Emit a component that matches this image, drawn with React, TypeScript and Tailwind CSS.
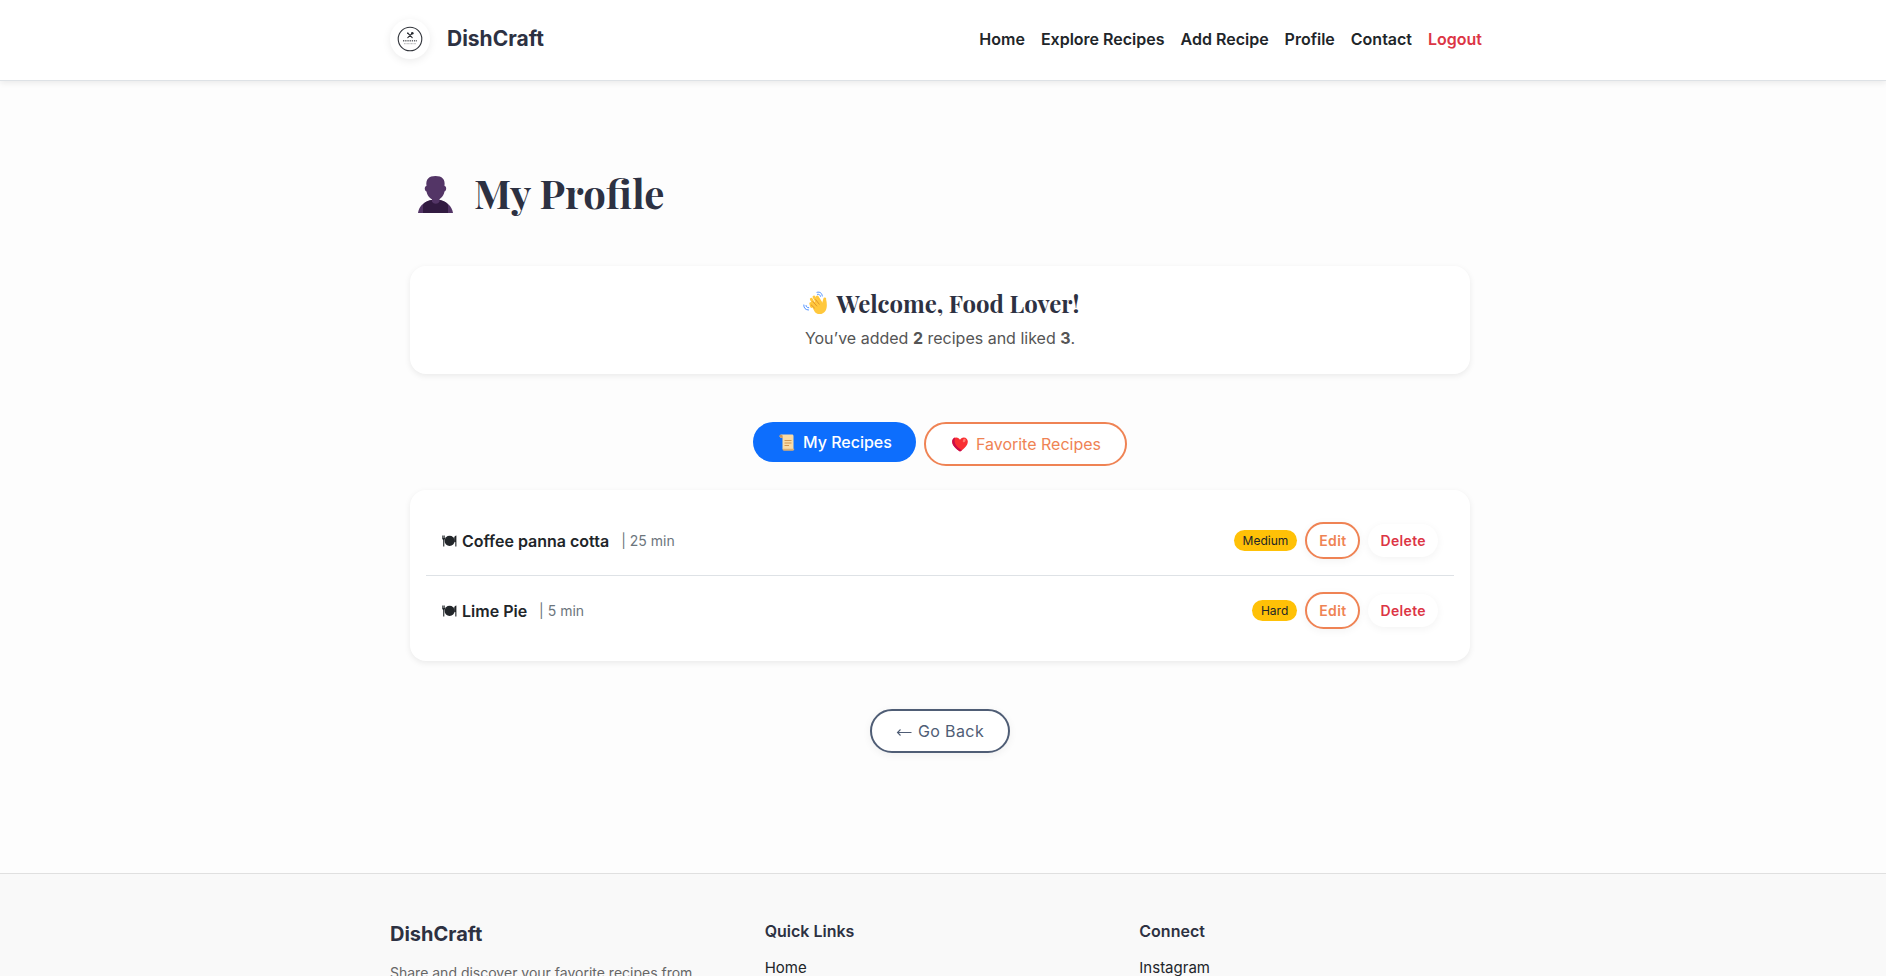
import React from "react";

const recipes = [
  { name: "Coffee panna cotta", time: "25 min", level: "Medium" },
  { name: "Lime Pie", time: "5 min", level: "Hard" },
];

const navLinks = ["Home", "Explore Recipes", "Add Recipe", "Profile", "Contact"];

function Logo() {
  return (
    <svg viewBox="0 0 40 40" className="size-10" aria-hidden="true">
      <circle cx="20" cy="20" r="11.8" fill="#fff" stroke="#30333a" strokeWidth="1.1" />
      <g stroke="#26292f" strokeWidth="1.1" strokeLinecap="round">
        <path d="M17.800 14.200l4.400 4.400M22.200 14.400l-4.400 4.200" />
      </g>
      <circle cx="22.300" cy="14.300" r="1.300" fill="#26292f" />
      <circle cx="17.800" cy="14.200" r="0.800" fill="#26292f" />
      <path d="M13 21.800h14" stroke="#26292f" strokeWidth="1.500" strokeDasharray="1.300 0.900" opacity="0.7" />
      <path d="M14 24.700h12" stroke="#26292f" strokeWidth="0.700" strokeDasharray="1 0.400" opacity="0.500" />
    </svg>
  );
}

function Bust() {
  return (
    <svg viewBox="0 0 35 37" className="mt-1 h-[37px] w-[35px]" aria-hidden="true">
      <path d="M0 37c1-6 4-10.500 13-13h9c8 2 12 7 13 13z" fill="#533566" />
      <path d="M5 37V28.500c2-2.500 5-4 9-4.500h7.500c3.500.6 6.500 2 8.500 4.500V37z" fill="#321b41" />
      <path d="M14 21h7.500v4.500c-1.500 3-6 3-7.500 0z" fill="#533566" />
      <path d="M8.500 10C7.500 3 11 0 17.500 0S27.500 3 26.500 10c2-.2 2.500 4.500 0 5.500C25.500 21 21 24.500 17.500 24.500S9.500 21 8.500 15.500c-2.500-1-2-5.700 0-5.500z" fill="#533566" />
    </svg>
  );
}

function Wave() {
  return (
    <svg viewBox="0 0 24 24" className="size-6" aria-hidden="true">
      <path
        d="M8.500 15.500L7.700 12.500M11 13L8.300 8.300M14 11L11 6M17.500 11L14.300 6M20.500 14.500C20 11.500 21.500 9.500 21.800 7.800"
        stroke="#ffc83d"
        strokeWidth="2.800"
        strokeLinecap="round"
        fill="none"
      />
      <path d="M7.500 13L15.500 8.500l4.500 3.500 3-4c1.200 4.500 1.200 9-.6 12-2.200 3.600-7.400 4.200-10.400 1.200z" fill="#ffc83d" />
      <path d="M8.300 14L11.500 17M9.800 10.500l4 4.500M12.700 8.700l3.500 4.500" stroke="#e08f2a" strokeWidth=".9" strokeLinecap="round" />
      <path d="M.8 14c-.2 3 1.700 5 4.700 5M3 14.500c0 1.300 1 2.100 2.700 2.200M14 1.300c3-.8 5 .8 5.300 3.700M14.500 3.300c1.700-.3 2.700.7 3 2" stroke="#5092ff" strokeWidth="1" strokeLinecap="round" fill="none" />
    </svg>
  );
}

function Scroll() {
  return (
    <svg viewBox="0 0 16 17" className="h-[17px] w-4" aria-hidden="true">
      <path d="M1.800.5h11.200c1 0 1.500.7 1.500 1.500v13H3.500V4C1.500 4 .5 3 .5 2z" fill="#fadba6" />
      <path d="M.5 1.800C.5.500 3.500.3 3.700 2.200V4C1.500 4 .5 3 .5 1.800z" fill="#c99660" />
      <path d="M3.500 14.800h11.800c0 1.400-.8 2-2 2H5c-1 0-1.500-.8-1.500-2z" fill="#dfae70" />
      <path d="M5.500 6.500h7M5.500 9h7M5.500 11.500h4.500" stroke="#d39650" strokeWidth="1" />
    </svg>
  );
}

function Heart() {
  return (
    <svg viewBox="0 0 16 15" className="h-[15px] w-4" aria-hidden="true">
      <path d="M8 14.600C4 12 .2 8.800.2 4.600.2 2 2 .4 4.200.4 6 .4 7.400 1.300 8 2.800 8.600 1.300 10 .4 11.800.4c2.200 0 4 1.600 4 4.200 0 4.200-3.800 7.400-7.800 10z" fill="#f92f32" />
      <path d="M3 .6C1.300 1.100.2 2.600.2 4.600c0 4.200 3.800 7.400 7.800 10 .7-.4 1.300-.9 2-1.400C4.500 10.500 1.300 6 3 .6z" fill="#ca0b4a" />
      <ellipse cx="12.200" cy="3.500" rx="1.300" ry="1.900" transform="rotate(25 12.200 3.500)" fill="#ff7a70" />
    </svg>
  );
}

function Plate() {
  return (
    <svg viewBox="0 0 15 12" className="h-3 w-[15px]" fill="#212529" aria-hidden="true">
      <circle cx="7.600" cy="5.800" r="5.100" />
      <path d="M.2.600h.7v2.500h.4V.6h.6v2.500h.4V.6H3v3.200L2.300 5.200v6.200H1.200V5.200L.2 3.800zM12.200 3c0-1.500 1-2.400 2.200-2.400v10.800h-1.100V7h-1.100z" />
    </svg>
  );
}

function ArrowLeft() {
  return (
    <svg viewBox="0 0 18 12" className="mt-0.5 h-3 w-[18px]" fill="none" stroke="currentColor" strokeWidth="1.1" aria-hidden="true">
      <path d="M1.500 6.500h14M4.500 3.500l-3 3 3 3" />
    </svg>
  );
}

export default function App() {
  return (
    <div className="min-h-screen bg-[#fdfdfd] font-['Inter',sans-serif] text-base leading-6 text-[#212529]">
      <header className="border-b border-[#dee2e6] bg-white pr-1.5 shadow-[0_2px_6px_rgba(0,0,0,0.08)]">
        <div className="mx-auto flex h-20 max-w-[1100px] items-center justify-between pb-0.5">
          <a href="#home" className="flex items-center gap-[17px] text-[21px] font-bold text-[#2d3142]">
            <span className="rounded-full bg-white shadow-[0_2px_8px_rgba(0,0,0,0.08)]">
              <Logo />
            </span>
            DishCraft
          </a>
          <nav className="flex gap-4 pr-2 font-semibold">
            {navLinks.map((label) => (
              <a key={label} href="#nav">
                {label}
              </a>
            ))}
            <button type="button" className="text-[#dc3545]">
              Logout
            </button>
          </nav>
        </div>
      </header>

      <div className="pr-1.5">
        <main className="mx-auto max-w-[1060px] pt-20 pb-[120px]">
          <h1 className="flex items-center gap-[21px] pl-2 font-['Playfair_Display','Liberation_Serif',serif] text-[40px] leading-[63px] font-bold text-[#2d3142]">
            <Bust />
            My Profile
          </h1>

          <section className="mt-[42px] rounded-2xl bg-white p-6 text-center shadow-[0_2px_6px_rgba(0,0,0,0.08)]">
            <h2 className="flex items-center justify-center gap-2.5 pl-0.5 font-['Playfair_Display','Liberation_Serif',serif] text-2xl leading-[26px] font-bold text-[#2d3142]">
              <Wave />
              Welcome, Food Lover!
            </h2>
            <p className="mt-2.5 text-[#555]">
              You’ve added <strong>2</strong> recipes and liked <strong>3</strong>.
            </p>
          </section>

          <div className="mt-12 flex items-start justify-center gap-2">
            <button type="button" className="flex h-10 items-center gap-2 rounded-full bg-[#0d6efd] pr-6 pl-[26px] font-medium text-white">
              <Scroll />
              My Recipes
            </button>
            <button type="button" className="flex h-11 items-center gap-2 rounded-full border-2 border-[#ef8354] bg-white pr-6 pl-[26px] text-[#ef8354]">
              <Heart />
              Favorite Recipes
            </button>
          </div>

          <ul className="mt-6 rounded-2xl bg-white p-4 shadow-[0_2px_6px_rgba(0,0,0,0.08)]">
            {recipes.map((r) => (
              <li key={r.name} className="flex items-center justify-between border-b border-[#dee2e6] p-4 last:border-b-0">
                <div className="flex items-center">
                  <Plate />
                  <span className="ml-[5px] font-semibold">{r.name}</span>
                  <span className="ml-3 text-sm text-[#6c757d]">| {r.time}</span>
                </div>
                <div className="flex items-center gap-2">
                  <span className="rounded-full bg-[#ffc107] px-[9px] text-xs leading-[21px]">{r.level}</span>
                  <button type="button" className="h-[37px] rounded-full border-2 border-[#ef8354] bg-white px-3 text-sm font-semibold tracking-wide text-[#ef8354] shadow-[0_2px_8px_rgba(0,0,0,0.05)]">
                    Edit
                  </button>
                  <button type="button" className="h-[33px] rounded-full bg-white px-3 text-sm font-semibold tracking-wide text-[#dc3545] shadow-[0_2px_8px_rgba(0,0,0,0.05)]">
                    Delete
                  </button>
                </div>
              </li>
            ))}
          </ul>

          <div className="mt-12 flex justify-center">
            <button type="button" className="flex h-11 items-center gap-1 rounded-full border-2 border-[#4f5d75] bg-white px-6 tracking-wide text-[#4f5d75] shadow-[0_2px_8px_rgba(0,0,0,0.06)]">
              <ArrowLeft />
              Go Back
            </button>
          </div>
        </main>
      </div>

      <footer className="border-t border-[#e0e0e0] bg-[#f9f9f9] pr-1.5">
        <div className="mx-auto grid max-w-[1100px] grid-cols-3 gap-6 pt-12">
          <div>
            <h2 className="text-xl leading-6 font-bold text-[#2d3142]">DishCraft</h2>
            <p className="mt-[17px] text-sm text-[#666]">Share and discover your favorite recipes from</p>
          </div>
          <div>
            <h3 className="leading-[18px] font-semibold text-[#2d3142]">Quick Links</h3>
            <a href="#home" className="mt-4 block text-[15px]">Home</a>
          </div>
          <div>
            <h3 className="leading-[18px] font-semibold text-[#2d3142]">Connect</h3>
            <a href="#instagram" className="mt-4 block text-[15px]">Instagram</a>
          </div>
        </div>
      </footer>
    </div>
  );
}
